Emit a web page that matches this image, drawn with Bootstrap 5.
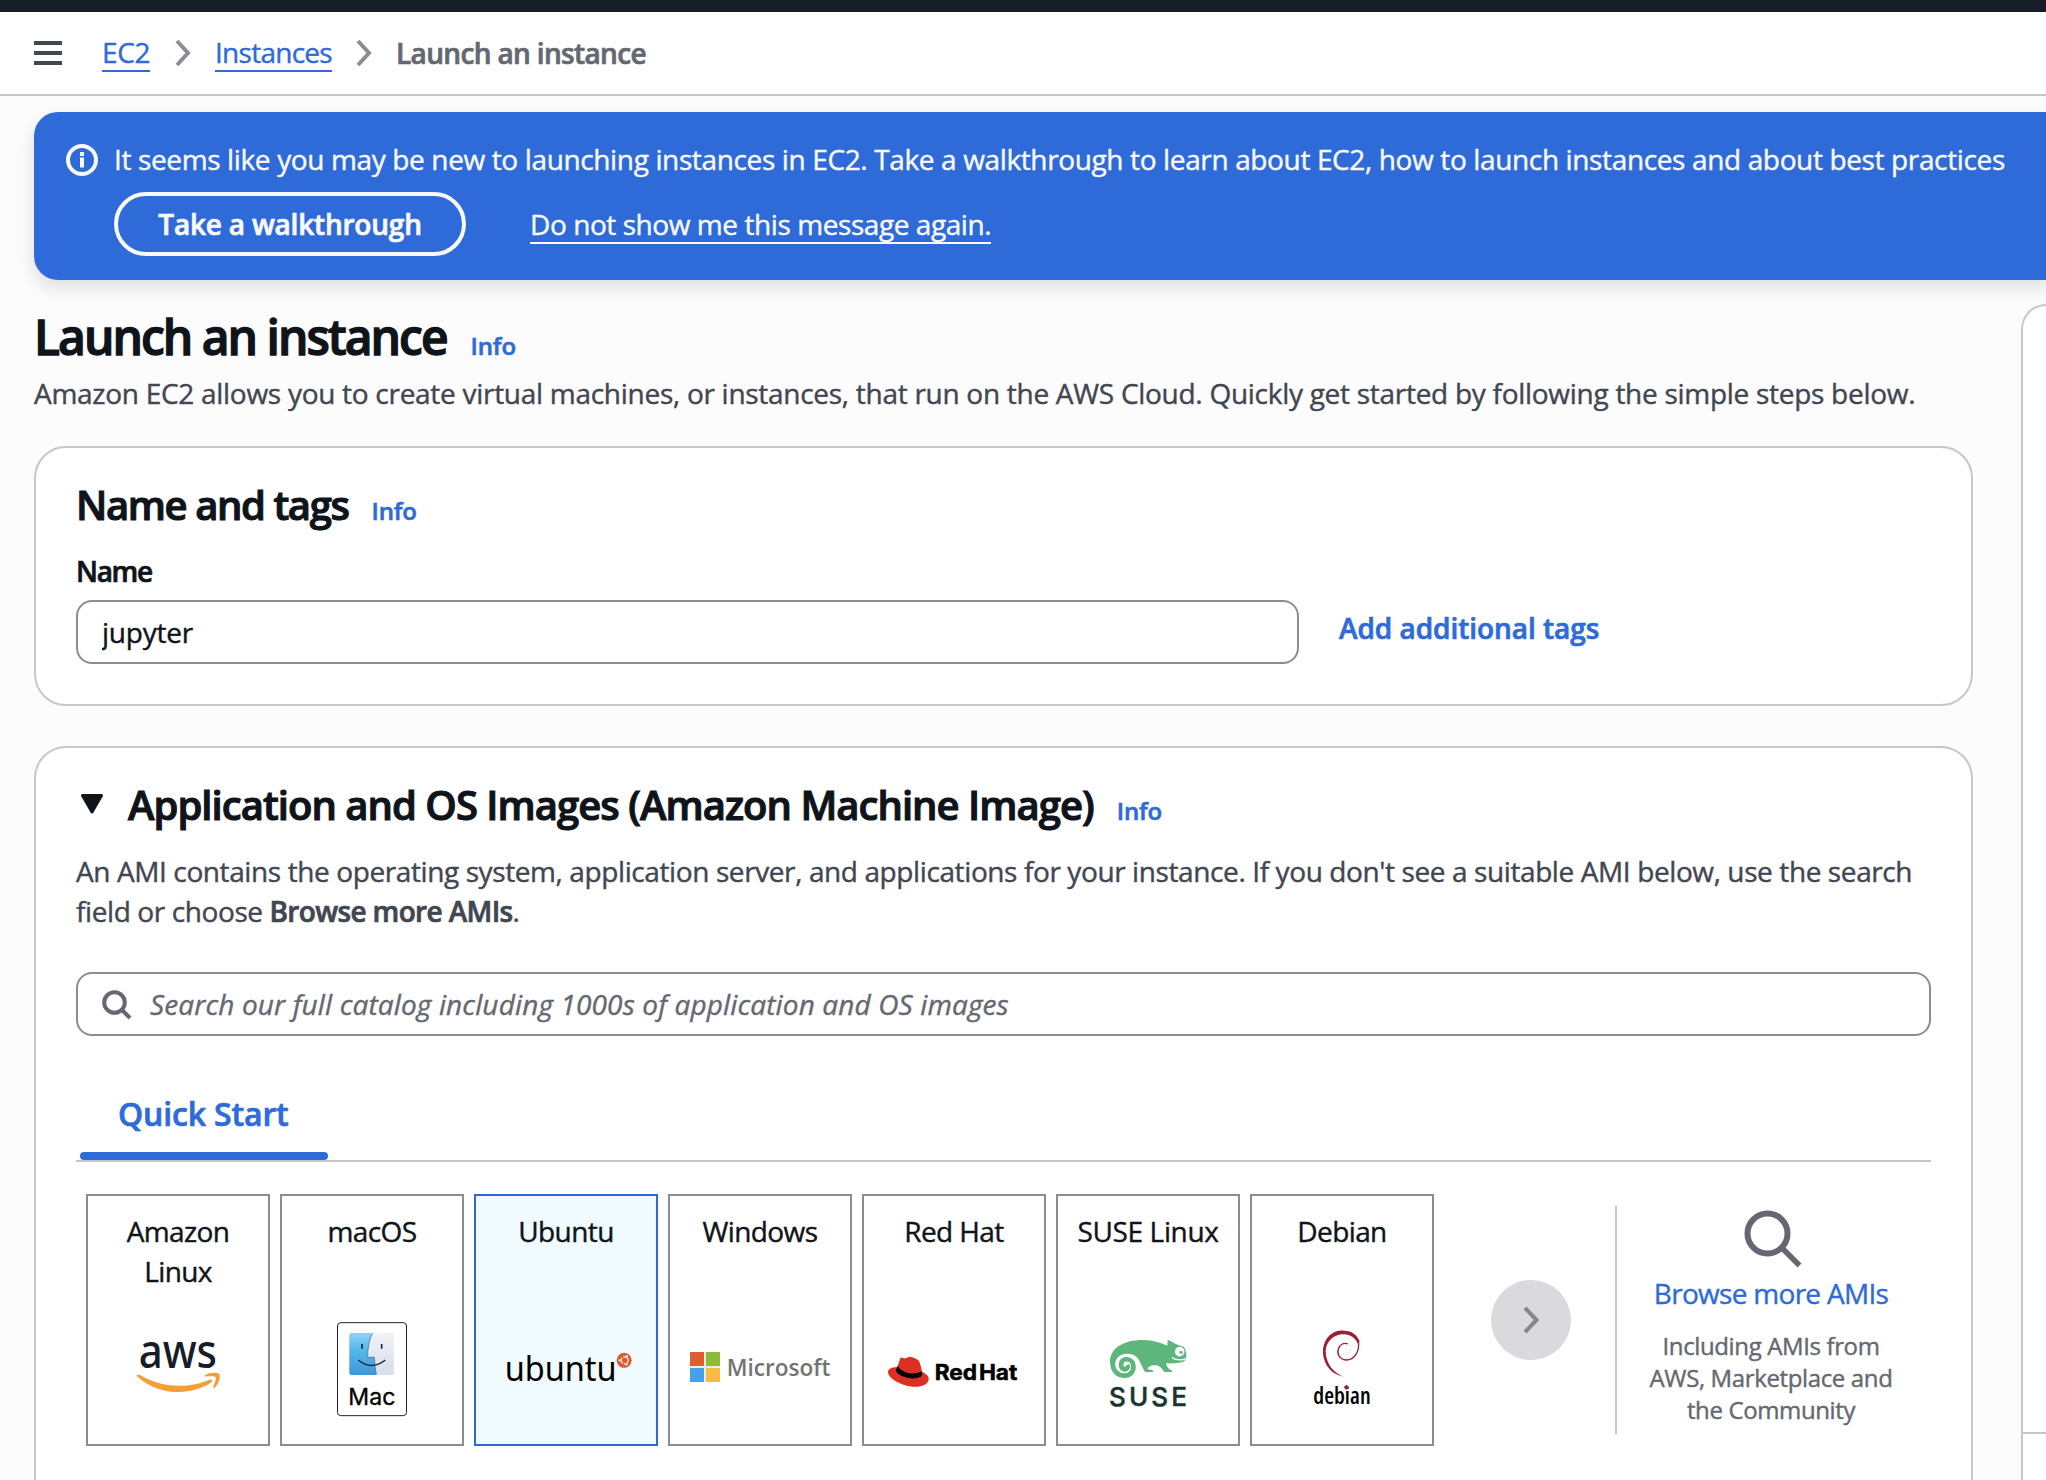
<!DOCTYPE html>
<html lang="en">
<head>
<meta charset="utf-8">
<meta name="viewport" content="width=device-width, initial-scale=1">
<title>Launch an instance | EC2</title>
<link href="https://cdn.jsdelivr.net/npm/bootstrap@5.3.0/dist/css/bootstrap.min.css" rel="stylesheet">
<style>
  body { font-family: "Open Sans", "Noto Sans", sans-serif; font-size: 28px; line-height: 40px; letter-spacing: -.4px; color: #0f141a; background: #fcfcfd; height: 1480px; -webkit-text-stroke: .4px; }
  a, .link-blue { color: #2e6bd9; text-decoration: none; }
  .semi { font-weight: 600; -webkit-text-stroke: .7px; }
  svg { display: block; flex: none; -webkit-text-stroke: 0; }
  .console-strip { height: 12px; background: #161d26; }
  .crumb-bar { height: 84px; border-bottom: 2px solid #c6c6cd; padding-left: 34px; }
  .crumb-link { line-height: 36px; border-bottom: 2px solid #2e6bd9; margin-top: 0; }
  .crumb-now { color: #656871; letter-spacing: -.65px; }
  .tip { margin: 16px 0 0 34px; height: 168px; border-radius: 24px 0 0 24px; background: #2e6bd9; color: #f9f9fb; padding: 28px 0 0 32px; box-shadow: 0 8px 16px 2px rgba(0,7,22,.1); }
  .tip-msg { letter-spacing: -.365px; line-height: 39px; white-space: nowrap; }
  .tip-btn { width: 352px; height: 64px; border: 4px solid #f9f9fb; border-radius: 32px; color: #f9f9fb; line-height: 56px; letter-spacing: -.2px; text-align: center; }
  .tip-link { line-height: 36px; color: #f9f9fb; border-bottom: 2px solid #f9f9fb; letter-spacing: -.43px; margin: 2px 0 0 64px; }
  .info-link { font-size: 24px; font-weight: 600; letter-spacing: -.15px; -webkit-text-stroke: .6px; }
  .main-col { width: 1939px; }
  .page-title { font-size: 48px; font-weight: 600; line-height: 60px; letter-spacing: -2px; margin: 0; -webkit-text-stroke: 1.3px; }
  .page-desc { color: #424650; letter-spacing: -.28px; white-space: nowrap; }
  .panel { border: 2px solid #c6c6cd; border-radius: 32px; background: #fff; padding: 0 40px; }
  .panel-title { font-size: 40px; font-weight: 600; line-height: 50px; letter-spacing: -1.4px; margin: 0; -webkit-text-stroke: 1.1px; }
  .field { height: 64px; border: 2px solid #8c8c94; border-radius: 16px; font-size: 28px; letter-spacing: -.22px; color: #0f141a; padding: 0 24px; }
  .field::placeholder { color: #656871; font-style: italic; letter-spacing: .13px; opacity: 1; }
  .search-icon { position: absolute; left: 25px; top: 17px; }
  .ami-desc { color: #424650; letter-spacing: -.395px; }
  .ami-tabs { border-bottom: 2px solid #c6c6cd; margin-top: 50px; padding-left: 4px; height: 76px; }
  .ami-tab { height: 66px; padding: 3px 0 0 38px; font-size: 32px; font-weight: 600; line-height: 50px; letter-spacing: -.15px; -webkit-text-stroke: .7px; }
  .ami-tab-line { width: 248px; height: 8px; border-radius: 4px; background: #2e6bd9; }
  .os-row { padding: 32px 0 0 10px; }
  .os-tile { width: 184px; height: 252px; border: 2px solid #8c8c94; text-align: center; padding-top: 15px; margin-right: 10px; letter-spacing: -.6px; }
  .os-tile.chosen { border-color: #2e6bd9; background: #f0fbff; }
  .os-name { height: 80px; }
  .next-btn { width: 80px; height: 80px; border-radius: 50%; background: #d9d9de; margin: 86px 0 0 47px; }
  .browse-box { height: 228px; margin: 12px 0 0 44px; border-left: 2px solid #c6c6cd; width: 310px; text-align: center; padding-top: 1px; }
  .browse-note { color: #656871; font-size: 24px; line-height: 32px; letter-spacing: -.37px; margin-top: 17px; }
  .side-panel { height: 1176px; border: 2px solid #c6c6cd; border-width: 2px 0 0 2px; border-radius: 32px 0 0 0; background: #fff; margin: 24px 0 0 48px; }
  .side-head { height: 1128px; border-bottom: 2px solid #c6c6cd; }
</style>
<script src="https://cdn.jsdelivr.net/npm/bootstrap@5.3.0/dist/js/bootstrap.bundle.min.js"></script>
</head>
<body class="overflow-hidden">
<div class="console-strip"></div>
<nav class="crumb-bar bg-white d-flex align-items-center">
  <svg width="28" height="24"><path d="M0 2h28M0 12h28M0 22h28" stroke="#424650" stroke-width="4"/></svg>
  <a href="#" class="crumb-link" style="margin-left:40px">EC2</a>
  <svg width="16" height="28" style="margin:0 24px 0 25px"><path d="M2 2l11 12L2 26" fill="none" stroke="#8c8c94" stroke-width="4"/></svg>
  <a href="#" class="crumb-link" style="letter-spacing:-.73px">Instances</a>
  <svg width="16" height="28" style="margin:0 24px 0 24px"><path d="M2 2l11 12L2 26" fill="none" stroke="#8c8c94" stroke-width="4"/></svg>
  <span class="crumb-now semi">Launch an instance</span>
</nav>

<div class="tip">
  <div class="d-flex">
    <svg width="32" height="32" class="me-3" style="margin-top:4px"><circle cx="16" cy="16" r="14" fill="none" stroke="#f9f9fb" stroke-width="4"/><path d="M16 8v4M16 13.500v10" stroke="#f9f9fb" stroke-width="4"/></svg>
    <div class="tip-msg">It seems like you may be new to launching instances in EC2. Take a walkthrough to learn about EC2, how to launch instances and about best practices</div>
  </div>
  <div class="d-flex align-items-center" style="margin:13px 0 0 48px">
    <a href="#" class="tip-btn semi">Take a walkthrough</a>
    <a href="#" class="tip-link">Do not show me this message again.</a>
  </div>
</div>

<div class="d-flex" style="padding-left:34px">
  <main class="main-col flex-shrink-0">
    <div class="d-flex align-items-baseline" style="padding-top:27px">
      <h1 class="page-title">Launch an instance</h1><a href="#" class="info-link" style="margin-left:24px">Info</a>
    </div>
    <div class="page-desc" style="margin-top:6px">Amazon EC2 allows you to create virtual machines, or instances, that run on the AWS Cloud. Quickly get started by following the simple steps below.</div>

    <section class="panel" style="margin-top:33px;height:260px;padding-top:32px">
      <div class="d-flex align-items-baseline"><h2 class="panel-title">Name and tags</h2><a href="#" class="info-link" style="margin-left:23px">Info</a></div>
      <div class="semi" style="margin-top:20px;letter-spacing:-1.3px">Name</div>
      <div class="d-flex" style="margin-top:9px">
        <input class="form-control field" style="width:1223px" value="jupyter" aria-label="Name">
        <a href="#" class="semi" style="margin:8px 0 0 40px;letter-spacing:-.04px">Add additional tags</a>
      </div>
    </section>

    <section class="panel" style="margin-top:40px;height:734px;padding-top:32px;border-bottom:0;border-radius:32px 32px 0 0">
      <div class="d-flex align-items-baseline">
        <svg width="24" height="20" style="margin:0 24px 0 4px;position:relative;top:-6px"><path d="M2.500 1.500h19L12 18z" fill="#0f141a" stroke="#0f141a" stroke-width="3" stroke-linejoin="round"/></svg>
        <h2 class="panel-title" style="letter-spacing:-.96px">Application and OS Images (Amazon Machine Image)</h2><a href="#" class="info-link" style="margin-left:23px">Info</a>
      </div>
      <div class="ami-desc" style="margin-top:20px">An AMI contains the operating system, application server, and applications for your instance. If you don't see a suitable AMI below, use the search<br>field or choose <b class="semi" style="letter-spacing:-.64px">Browse more AMIs</b>.</div>
      <div class="position-relative" style="margin-top:41px">
        <input class="form-control field" style="padding-left:72px" placeholder="Search our full catalog including 1000s of application and OS images" aria-label="Search">
        <svg class="search-icon" width="32" height="32"><circle cx="13.500" cy="13.500" r="10.300" fill="none" stroke="#656871" stroke-width="4"/><path d="M20.500 20.500l8.500 8.500" stroke="#656871" stroke-width="4"/></svg>
      </div>
      <div class="ami-tabs"><div class="ami-tab link-blue">Quick Start</div><div class="ami-tab-line"></div></div>

      <div class="os-row d-flex">
        <div class="os-tile"><div class="os-name">Amazon<br>Linux</div>
          <svg width="180" height="153" viewBox="54 333 540 459">
            <text x="206" y="563" font-family="Noto Sans" font-weight="500" font-size="144" letter-spacing="0" fill="#161d26" textLength="235" lengthAdjust="spacingAndGlyphs">aws</text>
            <path fill="#f29f36" d="M199 587Q205 581 215 588C280 625 360 625 418 599Q432 596 424 607C370 645 270 653 199 587ZM402 589C412 577 440 576 448 582C453 592 445 615 432 625Q428 624 431 616C437 602 440 593 435 590C428 587 412 590 402 589Z"/>
          </svg></div>
        <div class="os-tile"><div class="os-name">macOS</div>
          <svg width="180" height="153" viewBox="636 333 540 459">
            <defs><linearGradient id="fb" x2="0" y2="1"><stop stop-color="#8fd2f5"/><stop offset=".4" stop-color="#55b7ea"/><stop offset="1" stop-color="#3f97dc"/></linearGradient><linearGradient id="fg" x2="0" y2="1"><stop stop-color="#f1f2f6"/><stop offset="1" stop-color="#d6dee9"/></linearGradient></defs>
            <rect x="802.500" y="428" width="207" height="279" rx="10" fill="#fff" stroke="#222" stroke-width="3"/>
            <rect x="838" y="459" width="134" height="126" rx="7" fill="url(#fg)"/>
            <path fill="url(#fb)" d="M845 459H907Q893 490 893 532H913Q914 560 919 585H845Q838 585 838 578V466Q838 459 845 459Z"/>
            <path d="M907 460Q893 490 893 532H913Q914 560 919 584" fill="none" stroke="#2c6d9c" stroke-width="2"/>
            <path d="M876 492v14M935 492v14" stroke="#16293a" stroke-width="5"/>
            <path d="M865 540Q904 573 946 540" fill="none" stroke="#16293a" stroke-width="4.500"/>
            <text x="835" y="674" font-family="Inter" font-weight="400" font-size="70" letter-spacing="0" stroke="#000" stroke-width="1" textLength="141" lengthAdjust="spacingAndGlyphs">Mac</text>
          </svg></div>
        <div class="os-tile chosen"><div class="os-name">Ubuntu</div>
          <svg width="180" height="153" viewBox="48 333 540 459">
            <text x="134" y="602" font-family="Noto Sans" font-size="106" letter-spacing="0" fill="#000" textLength="336" lengthAdjust="spacingAndGlyphs">ubuntu</text>
            <circle cx="492.500" cy="541" r="22.500" fill="#dd5b32"/>
            <circle cx="494" cy="541" r="10.500" fill="none" stroke="#fff" stroke-width="4" stroke-dasharray="18 4"/>
            <g fill="#fff" stroke="#dd5b32" stroke-width="1.500"><circle cx="479.500" cy="541" r="4"/><circle cx="500" cy="528.500" r="4"/><circle cx="500" cy="553.500" r="4"/></g>
          </svg></div>
        <div class="os-tile"><div class="os-name">Windows</div>
          <svg width="180" height="153" viewBox="630 333 540 459">
            <path fill="#e9efe2" d="M690 516h90v90h-90z"/><path fill="#e05c33" d="M690 516h42v42h-42z"/><path fill="#8dba39" d="M738 516h42v42h-42z"/><path fill="#49a0e8" d="M690 564h42v42h-42z"/><path fill="#f6bc42" d="M738 564h42v42h-42z"/>
            <text x="800" y="587" font-family="Open Sans" font-weight="600" font-size="72" letter-spacing="0" fill="#737373" textLength="311" lengthAdjust="spacingAndGlyphs">Microsoft</text>
          </svg></div>
        <div class="os-tile"><div class="os-name">Red Hat</div>
          <svg width="180" height="153" viewBox="42 333 540 459">
            <path fill="#dc3122" d="M114 577C114 565 128 561 142 562L150 537Q152 530 160 534Q170 537 175 530Q190 529 207 542Q212 555 216 575C232 582 238 592 236 600C230 622 195 625 160 614C130 603 115 590 114 577Z"/>
            <path d="M142 557C155 578 190 588 215 574Q218 582 214 589C195 604 140 590 138 571Z"/>
            <text x="254" y="599" font-family="Inter" font-weight="700" font-size="65" letter-spacing="0" word-spacing="-10" stroke="#000" stroke-width="1.500" textLength="248" lengthAdjust="spacingAndGlyphs">Red Hat</text>
          </svg></div>
        <div class="os-tile"><div class="os-name" style="letter-spacing:-.36px">SUSE Linux</div>
          <svg width="180" height="153" viewBox="624 333 540 459">
            <path fill="#5db77c" d="M780 550C778 505 820 480 877 480C915 480 932 490 952 497L953 479C970 487 985 497 1001 500C1009 510 1010 525 1008 537C1003 547 990 551 948 550C950 560 955 568 966 572V576H943C935 563 925 555 917 556C900 556 893 562 893 568L908 571 910 576H886C878 566 872 545 862 533C848 517 815 518 802 534C795 542 795 552 796 560Z"/>
            <path d="M788 548C787 571 803 587 824 587C843 587 852 572 850 557C848 541 835 537 826 538C810 542 808 567 825 568C832 567 835 562 832 555" fill="none" stroke="#5db77c" stroke-width="14"/>
            <circle cx="989" cy="515" r="14.500" fill="#fff"/><circle cx="993" cy="517" r="5" fill="#5db77c"/>
            <path d="M966 533Q985 545 1009 536" fill="none" stroke="#fff" stroke-width="4"/>
            <text x="777" y="678" font-family="Inter" font-weight="500" font-size="78" letter-spacing="0" fill="#173630" stroke="#173630" stroke-width="1.500" textLength="234" lengthAdjust="spacing">SUSE</text>
          </svg></div>
        <div class="os-tile"><div class="os-name">Debian</div>
          <svg width="180" height="153" viewBox="36 333 540 459">
            <path fill="#a01d36" d="M311 590C270 583 247 548 249 508C253 470 282 448 312 452C335 452 350 463 359 484L354 492C345 470 325 460 305 463C275 466 257 490 257 515C258 550 280 578 311 590Z"/>
            <path d="M355 482C360 512 345 540 318 540C298 538 290 520 295 507C300 492 312 487 324 492" fill="none" stroke="#a01d36" stroke-width="4"/>
            <path d="M330 497l1 1M331 508l1 1M327 518l1 1M319 523l1 1" stroke="#a01d36" stroke-width="2"/>
            <text x="220" y="671" font-family="Open Sans" font-weight="600" font-stretch="75%" font-size="68" letter-spacing="0" fill="#000" textLength="172" lengthAdjust="spacingAndGlyphs">debian</text>
            <path d="M319 614l8 8-8 8-8-8z" fill="#a01d36"/>
          </svg></div>
        <div class="next-btn d-flex align-items-center justify-content-center flex-shrink-0"><svg width="18" height="28"><path d="M3 2l11.500 12L3 26" fill="none" stroke="#85868b" stroke-width="4"/></svg></div>
        <div class="browse-box flex-shrink-0">
          <svg width="64" height="64" viewBox="0 0 64 64" style="margin:0 0 0 124px"><circle cx="26.500" cy="26.500" r="20" fill="none" stroke="#656871" stroke-width="6"/><path d="M41 41l17.500 17.500" stroke="#656871" stroke-width="5.500"/></svg>
          <a href="#" class="d-block" style="letter-spacing:-.7px;margin-top:2px">Browse more AMIs</a>
          <div class="browse-note">Including AMIs from<br>AWS, Marketplace and<br>the Community</div>
        </div>
      </div>
    </section>
  </main>
  <aside class="side-panel flex-grow-1"><div class="side-head"></div></aside>
</div>
</body>
</html>
